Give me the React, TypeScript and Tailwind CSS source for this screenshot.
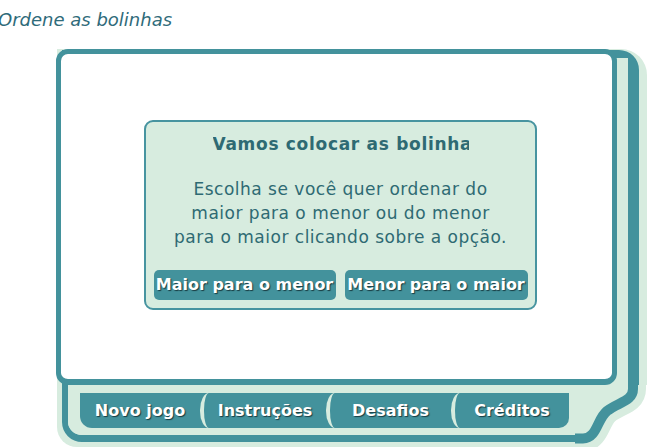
const TEAL = "#43929c";

function Tab({ label, className }: { label: string; className: string }) {
  return (
    <div
      className={`flex h-[35px] shrink-0 items-center justify-center bg-[#43929c] text-[16px] font-bold text-white [text-shadow:1px_1px_1px_rgba(20,50,55,0.9)] ${className}`}
    >
      {label}
    </div>
  );
}

// Decorative S-curve where the right column of the frame runs into the bottom bar.
function FrameCorner() {
  const ring = "M58,-4 L58,4 C58,16 44,17 32,26 C22,34 22,53.5 8,53.5 L-4,53.5";
  return (
    <svg className="absolute left-[518px] top-[336px]" width="82" height="62" viewBox="0 0 82 62" aria-hidden>
      <rect width="82" height="62" fill="#ffffff" />
      <path d={ring} fill="none" stroke="#d7ecdf" strokeWidth="26" />
      <path d={`${ring} L-4,-4 Z`} fill="#d7ecdf" />
      <path d={ring} fill="none" stroke={TEAL} strokeWidth="10" />
    </svg>
  );
}

export default function App() {
  return (
    <div className="h-[447px] w-[657px] overflow-hidden bg-white font-['DejaVu_Sans',Verdana,sans-serif]">
      <p className="-ml-[2px] pt-[9px] text-[18px] italic leading-[22px] text-[#2f6b7a]">Ordene as bolinhas</p>

      {/* back layer of the frame: green edge, teal ring, green fill */}
      <div className="relative ml-[57px] mt-[18px] h-[398px] w-[590px] rounded-tr-[26px] rounded-br-[20px] rounded-bl-[20px] bg-[#d7ecdf] pt-[1px] pr-[8px] pb-[5px] pl-[5px]">
        <div className="h-full rounded-tr-[20px] rounded-br-[16px] rounded-bl-[20px] border-t-[8px] border-r-[11px] border-b-[7px] border-l-[6px] border-[#43929c]">
          <div className="flex h-full flex-col rounded-bl-[14px] bg-[#d7ecdf]">
            {/* main white board */}
            <div className="-mt-[9px] -ml-[12px] h-[336px] w-[561px] shrink-0 rounded-[12px] border-[5px] border-b-[6px] border-[#43929c] bg-white pt-[66px] pl-[83px]">
              <div className="flex h-[190px] w-[393px] flex-col items-center rounded-[9px] border-2 border-[#4794a0] bg-[#d7ecdf] pt-[12px] text-[#2e6a73]">
                <div className="w-[256px] overflow-hidden whitespace-nowrap text-center text-[17px] font-bold leading-[20px] tracking-[0.7px]">
                  Vamos colocar as bolinhas
                </div>
                <p className="mt-[23px] whitespace-nowrap text-center text-[17px] leading-[24px] tracking-[0.5px]">
                  Escolha se você quer ordenar do
                  <br />
                  maior para o menor ou do menor
                  <br />
                  para o maior clicando sobre a opção.
                </p>
                <div className="mt-[21px] flex gap-[9px]">
                  <button className="h-[30px] w-[182px] whitespace-nowrap rounded-[5px] bg-[#43929c] text-[16px] font-bold text-white [text-shadow:1px_1px_1px_rgba(20,50,55,0.9)]">
                    Maior para o menor
                  </button>
                  <button className="h-[30px] w-[183px] whitespace-nowrap rounded-[5px] bg-[#43929c] text-[16px] font-bold text-white [text-shadow:1px_1px_1px_rgba(20,50,55,0.9)]">
                    Menor para o maior
                  </button>
                </div>
              </div>
            </div>

            {/* menu tabs */}
            <div className="mt-[8px] ml-[12px] flex">
              <Tab label="Novo jogo" className="w-[130px] rounded-bl-[12px] pr-[10px]" />
              <Tab
                label="Instruções"
                className="-ml-[10px] w-[136px] rounded-l-[9px_17px] border-l-4 border-[#d7ecdf] pr-[10px]"
              />
              <Tab
                label="Desafios"
                className="-ml-[10px] w-[135px] rounded-l-[9px_17px] border-l-4 border-[#d7ecdf] pr-[10px]"
              />
              <Tab
                label="Créditos"
                className="-ml-[10px] w-[118px] rounded-l-[9px_17px] rounded-br-[10px] border-l-4 border-[#d7ecdf]"
              />
            </div>
          </div>
        </div>
        <FrameCorner />
      </div>
    </div>
  );
}
